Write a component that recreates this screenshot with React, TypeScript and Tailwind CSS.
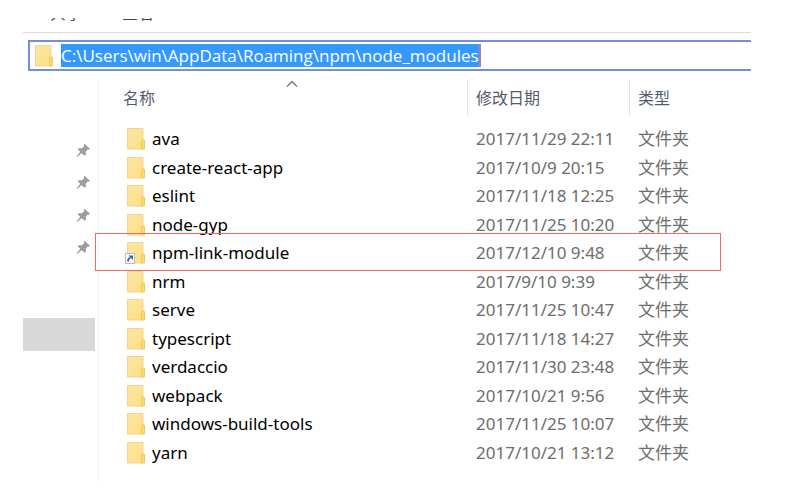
type Entry = { name: string; modified: string; link?: boolean };

const entries: Entry[] = [
  { name: "ava", modified: "2017/11/29 22:11" },
  { name: "create-react-app", modified: "2017/10/9 20:15" },
  { name: "eslint", modified: "2017/11/18 12:25" },
  { name: "node-gyp", modified: "2017/11/25 10:20" },
  { name: "npm-link-module", modified: "2017/12/10 9:48", link: true },
  { name: "nrm", modified: "2017/9/10 9:39" },
  { name: "serve", modified: "2017/11/25 10:47" },
  { name: "typescript", modified: "2017/11/18 14:27" },
  { name: "verdaccio", modified: "2017/11/30 23:48" },
  { name: "webpack", modified: "2017/10/21 9:56" },
  { name: "windows-build-tools", modified: "2017/11/25 10:07" },
  { name: "yarn", modified: "2017/10/21 13:12" },
];

function FolderIcon({ link = false }: { link?: boolean }) {
  return (
    <svg width="22" height="24" viewBox="0 0 22 24" className="shrink-0" aria-hidden="true">
      <defs>
        <linearGradient id="folder" x1="0" y1="0" x2="1" y2="1">
          <stop offset="0" stopColor="#fbe6a6" />
          <stop offset="1" stopColor="#fde083" />
        </linearGradient>
      </defs>
      <path d="M3.500 1.500h15.500v20.500h-15.500z" fill="url(#folder)" stroke="#f2d390" />
      <path d="M17.500 22v-7.500l1-1.500h1.500l0.500 1v8z" fill="#fcda6c" stroke="#f2c75a" />
      {link && (
        <g>
          <rect x="1.500" y="12.500" width="9" height="10" fill="#fff" stroke="#b4bcc6" />
          <path d="M4 20.500c0-2.500 0.700-3.500 2.500-4" fill="none" stroke="#2c62a8" strokeWidth="1.800" />
          <path d="M4.500 14.500h4.500v4.500z" fill="#2c62a8" />
        </g>
      )}
    </svg>
  );
}

function PinIcon() {
  return (
    <svg width="15" height="15" viewBox="0 0 15 15" aria-hidden="true">
      <path
        d="M8.500 0.800 14 5.800 12.800 6.800 11.800 6.400 9.800 8.800 9.900 11.800 8.600 12.800 5.700 10.200 1 14 0.500 13.500 4.200 8.800 1.600 6.300 2.700 5.200 5.800 5.300 8.200 3.200 7.700 1.900z"
        fill="#9b9fa3"
      />
    </svg>
  );
}

function Header({ children, sorted = false }: { children: string; sorted?: boolean }) {
  return (
    <div className="relative mb-[9px] flex h-9 items-center border-r border-[#e3e3e3] pl-2 text-[#535c6b]">
      {children}
      {sorted && (
        <svg className="absolute top-0 left-[171px]" width="12" height="8" viewBox="0 0 12 8" aria-hidden="true">
          <path d="M1 6.500 6 1.500 11 6.500" fill="none" stroke="#7d7d7d" strokeWidth="1.500" />
        </svg>
      )}
    </div>
  );
}

export default function App() {
  return (
    <main className="bg-white pt-[18px] pr-[52px] pl-[23px] font-['Noto_Sans','Noto_Sans_CJK_SC',sans-serif] text-base text-black">
      <nav className="flex h-[3px] items-end gap-10 overflow-hidden pl-[27px] text-[#44474d]">
        <a href="#share" className="h-4 w-8 leading-4 whitespace-nowrap">共享</a>
        <a href="#view" className="h-4 w-8 leading-4 whitespace-nowrap">查看</a>
      </nav>

      <div className="mt-[11px] border-t border-[#dcdcdc] pt-[7px] pl-[5px]">
        <div className="flex h-[31px] items-center border-2 border-r-0 border-[#748de2] pl-[2px]">
          <FolderIcon />
          <input
            aria-label="地址"
            defaultValue="C:\Users\win\AppData\Roaming\npm\node_modules"
            className="ml-[7px] field-sizing-content h-[23px] border-r-2 border-[#b07fa5] bg-[#3399ff] font-['Open_Sans','Noto_Sans_CJK_SC',sans-serif] text-[17px] text-white outline-none"
          />
        </div>
      </div>

      <div className="mt-[9px] flex">
        <aside className="w-[76px] shrink-0 border-r border-[#f3f3f3] pt-[54px]">
          <ul>
            {["1", "2", "3", "4"].map((n) => (
              <li key={n} className="flex h-8 items-center justify-end pr-[7px] even:h-[33px]">
                <button type="button" aria-label="取消固定" className="size-[15px]">
                  <PinIcon />
                </button>
              </li>
            ))}
          </ul>
          <div className="mt-[54px] mr-[3px] h-[33px] bg-[#d9d9d9]" />
        </aside>

        <table className="mb-4 w-full table-fixed border-collapse text-left">
          <colgroup>
            <col className="w-[369px]" />
            <col className="w-[162px]" />
            <col />
          </colgroup>
          <thead>
            <tr>
              <th className="p-0 pl-4 font-normal"><Header sorted>名称</Header></th>
              <th className="p-0 font-normal"><Header>修改日期</Header></th>
              <th className="p-0 font-normal">
                <div className="mb-[9px] flex h-9 items-center pl-2 text-[#535c6b]">类型</div>
              </th>
            </tr>
          </thead>
          <tbody className="text-[17px]">
            {entries.map((entry) => (
              <tr key={entry.name} className="h-7 leading-6 even:h-[29px]">
                <td className="relative p-0 pl-[25px]">
                  <div className="flex items-center gap-[6px]">
                    <FolderIcon link={entry.link} />
                    <span>{entry.name}</span>
                  </div>
                  {entry.link && (
                    <span className="pointer-events-none absolute -top-[6px] -left-1 z-10 h-[38px] w-[626px] border border-[#f4675f]" />
                  )}
                </td>
                <td className="p-0 pl-2 text-[#6d6d6d]">{entry.modified}</td>
                <td className="p-0 pl-2 text-[#6d6d6d]">文件夹</td>
              </tr>
            ))}
          </tbody>
        </table>
      </div>
    </main>
  );
}
